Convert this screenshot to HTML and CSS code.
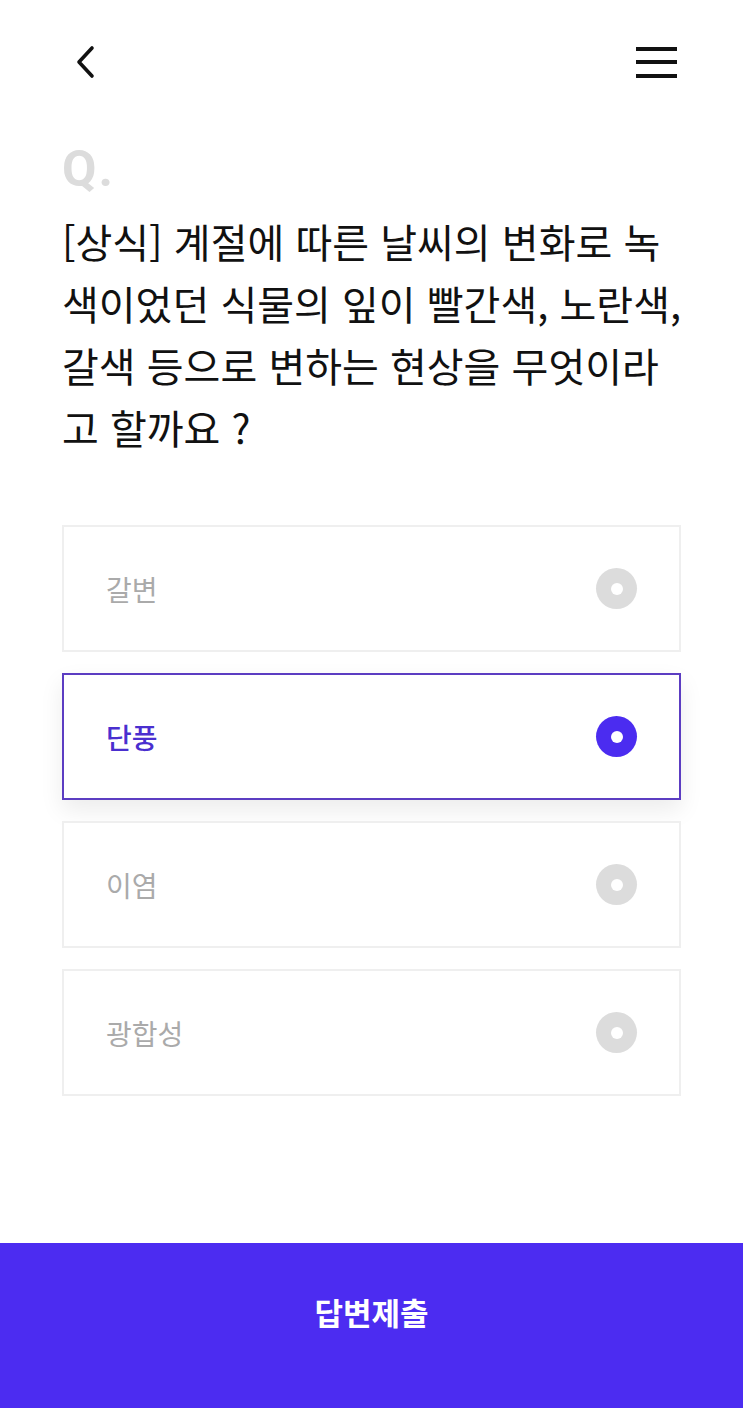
FILE: index.html
```html
<!DOCTYPE html>
<html lang="ko">
    <head>
        <meta charset="UTF-8" />
        <meta name="viewport" content="width=device-width, initial-scale=1.0" />
        <title>퀴즈</title>
        <link rel="stylesheet" href="styles.css">
    </head>

    <body>
        <div class="page">
            <header class="top">
                <a class="back" href="#">
                    <svg width="22" height="34" viewBox="0 0 22 34">
                        <path d="M18 3 L5 17 L18 31" fill="none" stroke="#111" stroke-width="3.6" stroke-linecap="round" stroke-linejoin="round" />
                    </svg>
                </a>
                <a class="menu" href="#">
                    <span></span>
                    <span></span>
                    <span></span>
                </a>
            </header>

            <section class="question">
                <div class="mark">Q.</div>
                <p class="text">[상식] 계절에 따른 날씨의 변화로 녹색이었던 식물의 잎이 빨간색, 노란색, 갈색 등으로 변하는 현상을 무엇이라고 할까요 ?</p>
            </section>

            <ul class="answers">
                <li>
                    <span class="label">갈변</span>
                    <span class="radio"></span>
                </li>
                <li class="on">
                    <span class="label">단풍</span>
                    <span class="radio"></span>
                </li>
                <li>
                    <span class="label">이염</span>
                    <span class="radio"></span>
                </li>
                <li>
                    <span class="label">광합성</span>
                    <span class="radio"></span>
                </li>
            </ul>

            <button class="submit">답변제출</button>
        </div>
    </body>
</html>
```

FILE: styles.css
```css
* {
    margin: 0;
    padding: 0;
    box-sizing: border-box;
}

body {
    font-family: "Noto Sans CJK KR", "Noto Sans", sans-serif;
    background: #fff;
    color: #111;
}

li {
    list-style-type: none;
}

.page {
    display: flex;
    flex-direction: column;
    height: 1408px;
}

.top {
    display: flex;
    justify-content: space-between;
    align-items: center;
    height: 124px;
    padding: 0 66px 0 74px;
}

.top .back {
    display: flex;
}

.top .menu {
    display: flex;
    flex-direction: column;
    justify-content: space-between;
    width: 41px;
    height: 31px;
}

.top .menu span {
    display: block;
    height: 4px;
    background: #111;
}

.question {
    padding: 0 57px 0 62px;
}

.question .mark {
    margin-top: 17px;
    font-family: "Roboto", "Noto Sans", sans-serif;
    font-size: 50px;
    font-weight: 700;
    line-height: 56px;
    color: #dcdcdc;
    letter-spacing: 2px;
}

.question .text {
    margin-top: 13px;
    font-size: 40px;
    line-height: 62px;
    color: #111;
}

.answers {
    display: flex;
    flex-direction: column;
    gap: 21px;
    margin-top: 67px;
    padding: 0 62px;
}

.answers li {
    display: flex;
    justify-content: space-between;
    align-items: center;
    height: 127px;
    padding: 0 42px 0 42px;
    border: 2px solid #efefef;
    background: #fff;
}

.answers .label {
    font-size: 28px;
    color: #aaa;
}

.answers .radio {
    position: relative;
    width: 41px;
    height: 41px;
    border-radius: 50%;
    background: #dcdcdc;
}

.answers .radio::after {
    content: "";
    position: absolute;
    top: 50%;
    left: 50%;
    width: 12px;
    height: 12px;
    margin: -6px 0 0 -6px;
    border-radius: 50%;
    background: #fff;
}

.answers li.on {
    border-color: #5c3dc2;
    box-shadow: 0 10px 22px rgba(0, 0, 0, 0.08);
}

.answers li.on .label {
    color: #4a2fcf;
    font-weight: 500;
}

.answers li.on .radio {
    background: #4b2cf0;
}

.submit {
    margin-top: auto;
    height: 165px;
    border: none;
    background: #4c2cf1;
    color: #fff;
    font-family: "Noto Sans CJK KR", sans-serif;
    font-size: 31px;
    font-weight: 700;
    padding-bottom: 28px;
}
```
